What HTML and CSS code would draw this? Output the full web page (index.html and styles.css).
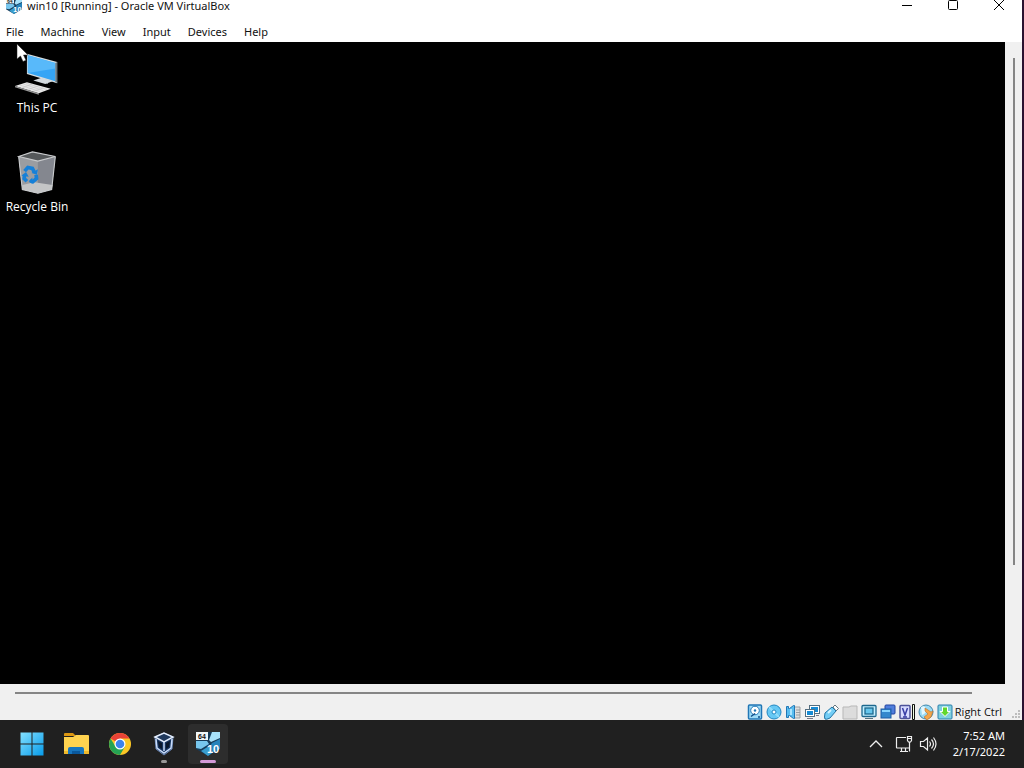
FILE: index.html
```html
<!DOCTYPE html>
<html lang="en">
<head>
  <meta charset="UTF-8">
  <meta name="viewport" content="width=device-width, initial-scale=1.0">
  <title>win10 [Running] - Oracle VM VirtualBox</title>
  <link rel="stylesheet" href="styles.css">
</head>
<body>
  <div class="window">
    <header class="titlebar">
      <svg class="title-icon" width="16" height="16" viewBox="0 0 24 24">
        <use href="#win10-logo"/>
      </svg>
      <span class="title">win10 [Running] - Oracle VM VirtualBox</span>
      <div class="window-controls">
        <button aria-label="Minimize"><svg width="12" height="12" viewBox="0 0 12 12"><path d="M1 5.5h10" stroke="#000"/></svg></button>
        <button aria-label="Maximize"><svg width="12" height="12" viewBox="0 0 12 12"><rect x="1.5" y="0.5" width="9" height="9" rx="1" fill="none" stroke="#000"/></svg></button>
        <button aria-label="Close"><svg width="12" height="12" viewBox="0 0 12 12"><path d="M1 0l10 10M11 0L1 10" stroke="#000"/></svg></button>
      </div>
    </header>

    <nav class="menubar">
      <button>File</button>
      <button>Machine</button>
      <button>View</button>
      <button>Input</button>
      <button>Devices</button>
      <button>Help</button>
    </nav>

    <div class="viewport">
      <main class="desktop">
        <button class="shortcut">
          <svg width="48" height="48" viewBox="0 0 48 48">
            <path d="M13 2l33 9v23l-33-10z" fill="#d5dcdf"/>
            <path d="M14 3.500l30 8.500v20l-30-9z" fill="#35a5f5"/>
            <path d="M14 3.500l30 8.500v6L14 23z" fill="#58b9fa"/>
            <path d="M44 12l2-1v23l-2-2z" fill="#66747b"/>
            <path d="M27 29l9 3v3l-9-3z" fill="#8c979e"/>
            <path d="M20 31l9-3 12 4-8 3z" fill="#d4dade"/>
            <path d="M0 37l13-4 26 7-13 5z" fill="#e9e9e9"/>
            <path d="M0 37l26 8v1.500L0 38.500z" fill="#9a9a9a"/>
            <path d="M5 36l22 7M9 35l22 7M12 34l23 7M8 39l11-4M14 41l11-4M20 43l11-4" stroke="#bbb" stroke-width=".5"/>
          </svg>
          <span>This PC</span>
        </button>
        <button class="shortcut">
          <svg width="48" height="48" viewBox="0 0 48 48">
            <path d="M4 6l15-5 25 5-4 36-15 4-17-4z" fill="#8f9296"/>
            <path d="M4 6l21 5v35L8 42z" fill="#9b9da1"/>
            <path d="M44 6l-19 5v35l15-4z" fill="#84878f"/>
            <path d="M4 6l15-5 25 5-19 5z" fill="#55585a"/>
            <path d="M8 37l13-3 20 3-1 5-15 4-17-4z" fill="#c4c5c6"/>
            <path d="M4 6l15-5 25 5-19 5zM4 6l4 36 17 4 15-4 4-36" fill="none" stroke="#c9cbcd" stroke-width="1.200"/>
            <path d="M10.500 22l3.500-4 5 1 2 4M23 26l.500 4-4 3.500-3-1M13 33l-3-3 .500-4" fill="none" stroke="#1680d8" stroke-width="4"/>
            <path d="M18 24l6 2 1-6zM19 29l-4 4 4 3zM7 27l5-4 3 5z" fill="#1680d8"/>
          </svg>
          <span>Recycle Bin</span>
        </button>
        <svg class="cursor" width="14" height="20" viewBox="0 0 14 20"><path d="M1 1v15l3.500-3 2.500 5.500 3-1.300-2.500-5.200H12z" fill="#fff" stroke="#222" stroke-width=".5"/></svg>
      </main>
      <div class="vscroll"><div class="thumb"></div></div>
    </div>
    <div class="hscroll"><div class="thumb"></div></div>

    <footer class="statusbar">
      <div class="indicators">
        <!-- hard disk -->
        <svg width="16" height="16" viewBox="0 0 16 16"><rect x="1.500" y="1" width="13" height="14" rx="1" fill="#9fdcf8" stroke="#2176b5" stroke-width="1.500"/><circle cx="8" cy="6.500" r="4.300" fill="#fff" stroke="#2176b5"/><circle cx="8" cy="6.500" r="1.200" fill="#2176b5"/><path d="M4 12.500l4-3M11 13h2" stroke="#124e88" stroke-width="1.500"/></svg>
        <!-- optical disc -->
        <svg width="16" height="16" viewBox="0 0 16 16"><circle cx="8" cy="8" r="7" fill="#67c8f4" stroke="#2187c2"/><path d="M8 8L3 3M8 8l5 5" stroke="#8fdcfb" stroke-width="2"/><circle cx="8" cy="8" r="2" fill="#fff" stroke="#2187c2"/></svg>
        <!-- audio -->
        <svg width="16" height="16" viewBox="0 0 16 16"><path d="M10 3h5v11h-5M11 6h4M11 8.500h4M11 11h4" fill="#dedede" stroke="#9b9fa2"/><path d="M1.500 2.500h2v2h1l4-3h1v13h-1l-4-3h-1v2h-2z" fill="#58bdf0" stroke="#2176b5"/><path d="M6 5v6" stroke="#a9e4ff" stroke-width="2"/></svg>
        <!-- network -->
        <svg width="16" height="16" viewBox="0 0 16 16"><rect x="5.500" y="1.500" width="10" height="8" fill="#fff" stroke="#536e80"/><path d="M7 3h7v5H7z" fill="#168bd4"/><rect x="1.500" y="5.500" width="9" height="7" fill="#fff" stroke="#536e80"/><path d="M3 7h6v4H3z" fill="#168bd4"/><path d="M3 14.500h6M12 11.500h3" stroke="#778"/></svg>
        <!-- usb -->
        <svg width="16" height="16" viewBox="0 0 16 16"><path d="M10 3l2-2 3.500 3.500L13 7z" fill="#fff" stroke="#667780"/><path d="M2 9l7-6 4 4-6 7q-4 2-5 1t0-6z" fill="#73cdf5" stroke="#2375a5"/><path d="M5 9l3-3" stroke="#d5f5ff" stroke-width="2"/></svg>
        <!-- shared folder -->
        <svg width="16" height="16" viewBox="0 0 16 16"><path d="M1 3h6l2-1h6v13H1z" fill="#dcdcdc" stroke="#b7b7b7"/></svg>
        <!-- display -->
        <svg width="16" height="16" viewBox="0 0 16 16"><rect x="1" y="1.500" width="14" height="11" rx="1" fill="#c2efff" stroke="#1d688e" stroke-width="1.300"/><rect x="4" y="4" width="8" height="6" fill="#65c6ec" stroke="#1d688e" stroke-width="1.300"/><path d="M4 14.500h8" stroke="#58747f"/></svg>
        <!-- recording -->
        <svg width="16" height="16" viewBox="0 0 16 16"><rect x="5" y="1" width="10" height="9" rx="1" fill="#507edc" stroke="#2444a0"/><rect x="1" y="5" width="10" height="9" fill="#3488cd" stroke="#1f5ca5"/><path d="M2 6h8v2H2z" fill="#89d5ff"/></svg>
        <!-- cpu -->
        <svg width="16" height="16" viewBox="0 0 16 16"><rect x="1" y="1.500" width="10" height="13" rx="1" fill="#d7dbff" stroke="#4e539a" stroke-width="1.500"/><path d="M3.500 4l2.500 7 2.500-7M4 13h4" fill="none" stroke="#383da5" stroke-width="1.500"/><path d="M13.500 .500h2v15h-2z" fill="#f0ffe5" stroke="#111"/></svg>
        <!-- mouse integration -->
        <svg width="16" height="16" viewBox="0 0 16 16"><circle cx="8" cy="8" r="7" fill="#9adaf4" stroke="#3d85aa"/><path d="M3 3q4-2 5 2t-4 6" fill="#e3f8ff"/><path d="M7 4l6 4 2-1-2 6-4 3-3-3 4-3-3-3z" fill="#f4a447" stroke="#b67131" stroke-width=".6"/></svg>
        <!-- keyboard capture -->
        <svg width="16" height="16" viewBox="0 0 16 16"><rect x="1" y="1" width="14" height="14" rx="1" fill="#80d0df" stroke="#297eac"/><path d="M5.500 3h5v4.500H13l-5 5-5-5h2.500z" fill="#61d72b" stroke="#fff"/></svg>
      </div>
      <span class="host-key">Right Ctrl</span>
      <svg class="grip" width="12" height="12" viewBox="0 0 12 12"><path d="M8 2h2v2H8zM5 5h2v2H5zM8 5h2v2H8zM2 8h2v2H2zM5 8h2v2H5zM8 8h2v2H8z" fill="#bdbdbd"/></svg>
    </footer>
  </div>

  <div class="taskbar">
    <div class="apps">
      <button aria-label="Start">
        <svg width="24" height="24" viewBox="0 0 24 24">
          <defs><linearGradient id="start" x2="1" y2="1"><stop stop-color="#83e0ff"/><stop offset="1" stop-color="#079bea"/></linearGradient></defs>
          <path d="M.500 .500h11v11H.500zM12.500 .500h11v11h-11zM.500 12.500h11v11H.500zM12.500 12.500h11v11h-11z" fill="url(#start)"/>
        </svg>
      </button>
      <button aria-label="File Explorer">
        <svg width="26" height="24" viewBox="0 0 26 24"><path d="M1 2q0-1 1-1h8l3 3H1z" fill="#dc9712"/><path d="M1 5h9l3-2h12q1 0 1 1v18H1z" fill="#ffd34f"/><path d="M1 19h25v3H1z" fill="#efb92b"/><path d="M5 22v-5q0-2 2-2h12q2 0 2 2v5z" fill="#1776bf"/><path d="M9 22v-3h8v3z" fill="#0a589c"/></svg>
      </button>
      <button aria-label="Google Chrome">
        <svg width="24" height="24" viewBox="0 0 24 24"><circle cx="12" cy="12" r="11" fill="#fbc725"/><path d="M12 12L2.500 6.500A11 11 0 0 1 21.500 6.500H12z" fill="#e84337"/><path d="M2.500 6.500A11 11 0 0 0 12 23l5-8.500-5 2.500-4.500-2.500z" fill="#25a354"/><circle cx="12" cy="12" r="5.500" fill="#fff"/><circle cx="12" cy="12" r="4.300" fill="#3d83ed"/></svg>
      </button>
      <button class="running" aria-label="VirtualBox Manager">
        <svg width="24" height="24" viewBox="0 0 24 24"><path d="M12 1l9 4-1 12-8 6-8-6L3 5z" fill="#17345f" stroke="#6d88b5"/><path d="M3 5l9-4 9 4-9 5z" fill="#20395d" stroke="#e5efff" stroke-width="1.500"/><path d="M12 10v9M4 7l1 9 7 5 7-5 1-9" fill="none" stroke="#c9dcfa" stroke-width="1.500"/><path d="M6 9l4 2v6l-3-2zM18 9l-4 2v6l3-2z" fill="#09172c"/></svg>
      </button>
      <button class="running active" aria-label="win10 virtual machine">
        <svg width="24" height="24" viewBox="0 0 24 24">
          <g id="win10-logo">
            <path d="M0 0h24v17l-12 7L0 17z" fill="#173b58"/>
            <path d="M0 9h11l2 3-8 5-5-1z" fill="#77c6ed"/>
            <path d="M16 0h8v6l-9 4-2-2z" fill="#a8e2fa"/>
            <path d="M16 11l8-4v10l-8 4-2-7z" fill="#2683bb"/>
            <path d="M5 19l8-5 3 7-4 3z" fill="#399dce"/>
            <path d="M0 0h12v8H0z" fill="#f2f7f8"/>
            <text x="2" y="7" class="logo-bits">64</text>
            <text x="11" y="21" class="logo-version">10</text>
          </g>
        </svg>
      </button>
    </div>
    <div class="tray">
      <button class="tray-more" aria-label="Show hidden icons"><svg width="14" height="14" viewBox="0 0 14 14"><path d="M1 10l6-6 6 6" fill="none" stroke="#eee" stroke-width="1.300"/></svg></button>
      <button aria-label="Network"><svg width="18" height="18" viewBox="0 0 18 18"><path d="M11 2.500H2q-.500 0-.500.500v9.500q0 .500.500.500h12.500M5 16.500h8M6.500 13v3.500M10.500 13v3.500M12.500 1.500h4v4l-1 1.500h-2l-1-1.500zM14.500 7v9.500M13 3.500h3" fill="none" stroke="#eee" stroke-width="1.200"/></svg></button>
      <button aria-label="Volume"><svg width="18" height="18" viewBox="0 0 18 18"><path d="M1.500 6.500h3l4-3.500v12l-4-3.500h-3zM10.500 6.500q2 2.500 0 5M12.500 4.500q4 4.500 0 9M14.500 2.500q5 6.500 0 13" fill="none" stroke="#eee" stroke-width="1.200"/></svg></button>
      <button class="clock"><span>7:52 AM</span><span>2/17/2022</span></button>
    </div>
  </div>
</body>
</html>
```
FILE: styles.css
```css
* { box-sizing: border-box; }

body {
  margin: 0;
  height: 100vh;
  display: flex;
  flex-direction: column;
  overflow: hidden;
  font-family: "Noto Sans", "Open Sans", sans-serif;
  font-size: 11px;
  line-height: 16px;
  color: #111;
  background: #202020;
}

button {
  padding: 0;
  border: 0;
  background: none;
  color: inherit;
  font: inherit;
}

svg {
  display: block;
  flex-shrink: 0;
}

.window {
  flex: 1;
  min-height: 0;
  display: flex;
  flex-direction: column;
  background: #f0f0f0;
  border-right: 2px solid #2a1230;
}

/* title and menu */
.titlebar {
  height: 16px;
  display: flex;
  align-items: center;
  gap: 5px;
  padding: 0 0 4px 6px;
  background: #fff;
}

.title {
  flex: 1;
  line-height: 12px;
}

.window-controls {
  display: flex;
}

.window-controls button {
  width: 46px;
  display: flex;
  justify-content: center;
}

.menubar {
  height: 26px;
  display: flex;
  align-items: center;
  gap: 17px;
  padding: 6px 6px 0;
  background: #fff;
}

/* guest screen */
.viewport {
  flex: 1;
  min-height: 0;
  display: flex;
}

.desktop {
  position: relative;
  flex: 1;
  display: flex;
  flex-direction: column;
  align-items: flex-start;
  gap: 35px;
  padding-top: 10px;
  background: #000;
  color: #fff;
}

.shortcut {
  width: 74px;
  display: flex;
  flex-direction: column;
  align-items: center;
  font-family: "Open Sans", sans-serif;
  font-size: 12px;
}

.shortcut svg {
  width: 44px;
  height: 44px;
  margin-bottom: 4px;
}

.cursor {
  position: absolute;
  left: 16px;
  top: 1px;
}

.vscroll {
  width: 17px;
  padding: 16px 7px 0 8px;
}

.thumb {
  background: #858585;
}

.vscroll .thumb {
  width: 2px;
  height: 81%;
}

.hscroll {
  height: 19px;
  padding: 8px 0 0 15px;
}

.hscroll .thumb {
  width: 95%;
  height: 2px;
}

.statusbar {
  height: 17px;
  display: flex;
  justify-content: flex-end;
  align-items: center;
}

.indicators {
  display: flex;
  gap: 3px;
}

.host-key {
  margin: 0 8px 0 2px;
  font-family: "Open Sans", sans-serif;
}

.grip {
  align-self: flex-end;
}

/* host taskbar */
.taskbar {
  height: 48px;
  display: flex;
  justify-content: space-between;
  align-items: center;
  padding: 0 19px 0 12px;
  background: #202020;
  color: #fff;
}

.apps {
  display: flex;
  gap: 4px;
}

.apps button {
  position: relative;
  width: 40px;
  height: 40px;
  display: flex;
  justify-content: center;
  align-items: center;
  border-radius: 4px;
}

.apps .active {
  background: #2d2d2d;
}

.running::after {
  content: "";
  position: absolute;
  bottom: 1px;
  width: 6px;
  height: 3px;
  border-radius: 2px;
  background: #999;
}

.apps .active::after {
  width: 16px;
  background: #d49ad8;
}

.logo-bits {
  font: bold 7px "Liberation Sans", sans-serif;
  fill: #111;
}

.logo-version {
  font: bold 11px "Liberation Sans", sans-serif;
  fill: #fff;
}

.tray {
  display: flex;
  align-items: center;
  gap: 6px;
}

.tray-more {
  margin-right: 6px;
}

.clock {
  display: flex;
  flex-direction: column;
  align-items: flex-end;
  margin-left: 10px;
}
```
